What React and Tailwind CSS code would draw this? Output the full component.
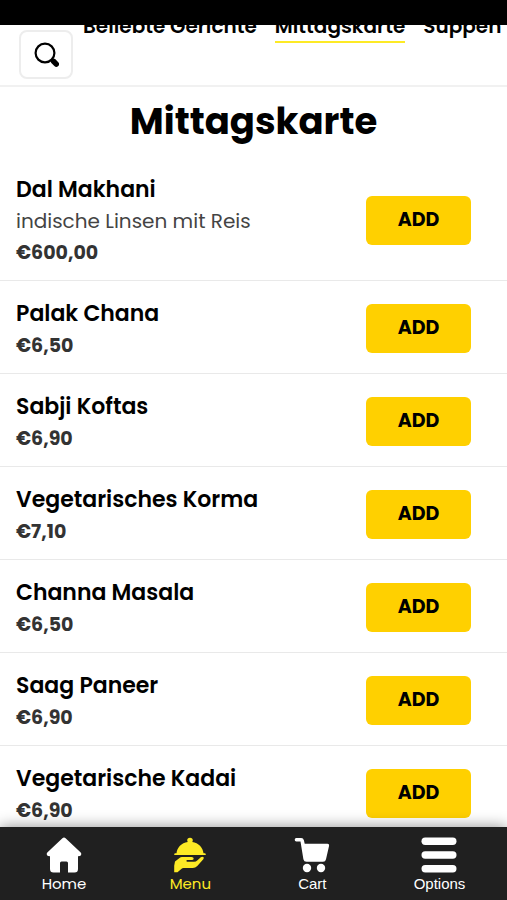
import React from "react";

const dishes = [
  { name: "Dal Makhani", description: "indische Linsen mit Reis", price: "€600,00" },
  { name: "Palak Chana", price: "€6,50" },
  { name: "Sabji Koftas", price: "€6,90" },
  { name: "Vegetarisches Korma", price: "€7,10" },
  { name: "Channa Masala", price: "€6,50" },
  { name: "Saag Paneer", price: "€6,90" },
  { name: "Vegetarische Kadai", price: "€6,90" },
];

function SearchIcon() {
  return (
    <svg viewBox="0 0 26 26" className="size-[26px]" fill="none" stroke="currentColor" aria-hidden="true">
      <circle cx="12" cy="11" r="9.400" strokeWidth="2.200" />
      <path d="M18.500 17.500l2 2" strokeWidth="3" />
      <path d="M20.500 19.300l2.800 2.800" strokeWidth="5.500" strokeLinecap="round" />
    </svg>
  );
}

function HomeIcon() {
  return (
    <svg viewBox="0 0 36 36" className="size-9" fill="currentColor" aria-hidden="true">
      <path d="M16.400 1.200Q18 0 19.600 1.200L34.700 15.600Q35.800 17 35 18.200Q34.300 19.100 32 19.200V32Q32 35.500 28.500 35.500H22V26Q22 24.500 20.500 24.500H15.500Q14 24.500 14 26V35.500H7.500Q4 35.500 4 32V19.200Q1.700 19.100 1 18.200Q.2 17 1.300 15.600Z" />
    </svg>
  );
}

function MenuIcon() {
  return (
    <svg viewBox="0 0 36 36" className="size-9" fill="currentColor" aria-hidden="true">
      <path d="M15.200 3.500Q15.200.8 18 .8Q20.800.8 20.800 3.500L20.300 5C26.500 6 31 10.500 31.500 16.300H33Q33.800 16.300 33.800 18H2.200Q2.200 16.300 3 16.300H4.500C5 10.500 9.500 6 15.700 5Z" />
      <path d="M3 24.500L7.500 20.900Q8.500 20 10 20H19.500Q21.800 20.200 21.700 21.700Q21.500 23 19.700 23.100H15.200Q14.400 23.200 14.400 24Q14.500 24.700 15.200 24.700H22Q24 24.700 25.500 23.200L28.800 20.300Q30.300 19.300 31.600 20.300Q32.200 21 31.300 22.200L25.300 29Q23.400 31 20.700 31H11.500Q10.300 31 9.300 31.900L5.500 35.200H2.200V28.700Z" />
    </svg>
  );
}

function CartIcon() {
  return (
    <svg viewBox="0 0 36 36" className="size-9" fill="currentColor" aria-hidden="true">
      <path d="M2.300 1H7.200Q9.300 1 9.900 3.200L10.700 6.800H33.500Q35.400 6.900 35.100 8.700L32 22.300Q31.500 24.800 29 24.800H12.500Q9.900 24.800 9.400 22.300L6.500 4.500H2.300Q.7 4.400.7 2.700Q.7 1 2.300 1Z" />
      <circle cx="13" cy="31" r="4.200" />
      <circle cx="27" cy="31" r="4.200" />
    </svg>
  );
}

function OptionsIcon() {
  return (
    <svg viewBox="0 0 36 36" className="size-9" fill="currentColor" aria-hidden="true">
      <rect x="0.500" y="0.500" width="35" height="7.500" rx="3.700" />
      <rect x="0.500" y="14.200" width="35" height="7.500" rx="3.700" />
      <rect x="0.500" y="28" width="35" height="7.500" rx="3.700" />
    </svg>
  );
}

const navItems = [
  { label: "Home", Icon: HomeIcon, style: "text-white" },
  { label: "Menu", Icon: MenuIcon, style: "text-[#fdea25]" },
  { label: "Cart", Icon: CartIcon, style: "text-white font-['Liberation_Sans',sans-serif]" },
  { label: "Options", Icon: OptionsIcon, style: "text-white font-['Liberation_Sans',sans-serif]" },
];

function Dish({ name, description, price }) {
  return (
    <li className="flex items-center justify-between border-b border-[#e9e9e9] pr-9 pl-4">
      <div className="pt-[17px] pb-[11px]">
        <h2 className="text-[22px] leading-8 font-semibold text-black">{name}</h2>
        {description && <p className="text-[20px] leading-[31px] text-[#444]">{description}</p>}
        <p className="text-[19px] leading-8 font-bold text-[#333]">{price}</p>
      </div>
      <button
        type="button"
        aria-label={`ADD ${name}`}
        className="mt-[3px] h-[49px] w-[105px] shrink-0 rounded-md bg-[#ffd000] text-[19px] font-bold text-black"
      >
        ADD
      </button>
    </li>
  );
}

export default function App() {
  return (
    <div className="flex h-screen flex-col overflow-hidden bg-white font-['Poppins','Inter',sans-serif] text-black">
      <div className="h-[25px] shrink-0 bg-black" />
      <header className="flex shrink-0 items-start overflow-hidden border-b-2 border-[#f1f1f1] pl-[19px]">
        <button
          type="button"
          aria-label="Search"
          className="mt-[5px] mb-[6px] flex h-[49px] w-[54px] shrink-0 items-center justify-center rounded-lg border-2 border-[#ededed]"
        >
          <SearchIcon />
        </button>
        <nav aria-label="Categories" className="-mt-[13px] ml-[10px] flex gap-[18px] text-[20px] leading-7 font-semibold whitespace-nowrap">
          <a href="#beliebte">Beliebte Gerichte</a>
          <a href="#mittagskarte" className="border-b-2 border-[#fdea25] pb-px">Mittagskarte</a>
          <a href="#suppen">Suppen</a>
        </nav>
      </header>
      <main className="min-h-0 flex-1 overflow-hidden">
        <h1 className="pt-[11px] pb-[13px] text-center text-[37px] leading-[46px] font-bold">Mittagskarte</h1>
        <ul>
          {dishes.map((dish) => (
            <Dish key={dish.name} {...dish} />
          ))}
        </ul>
      </main>
      <nav
        aria-label="Main"
        className="relative flex h-[73px] shrink-0 justify-around bg-[#202020] pt-[10px] shadow-[0_0_14px_rgba(0,0,0,0.45)]"
      >
        {navItems.map(({ label, Icon, style }) => (
          <a key={label} href={`#${label.toLowerCase()}`} className={`flex flex-col items-center text-[15px] leading-[22px] ${style}`}>
            <Icon />
            <span>{label}</span>
          </a>
        ))}
      </nav>
    </div>
  );
}
